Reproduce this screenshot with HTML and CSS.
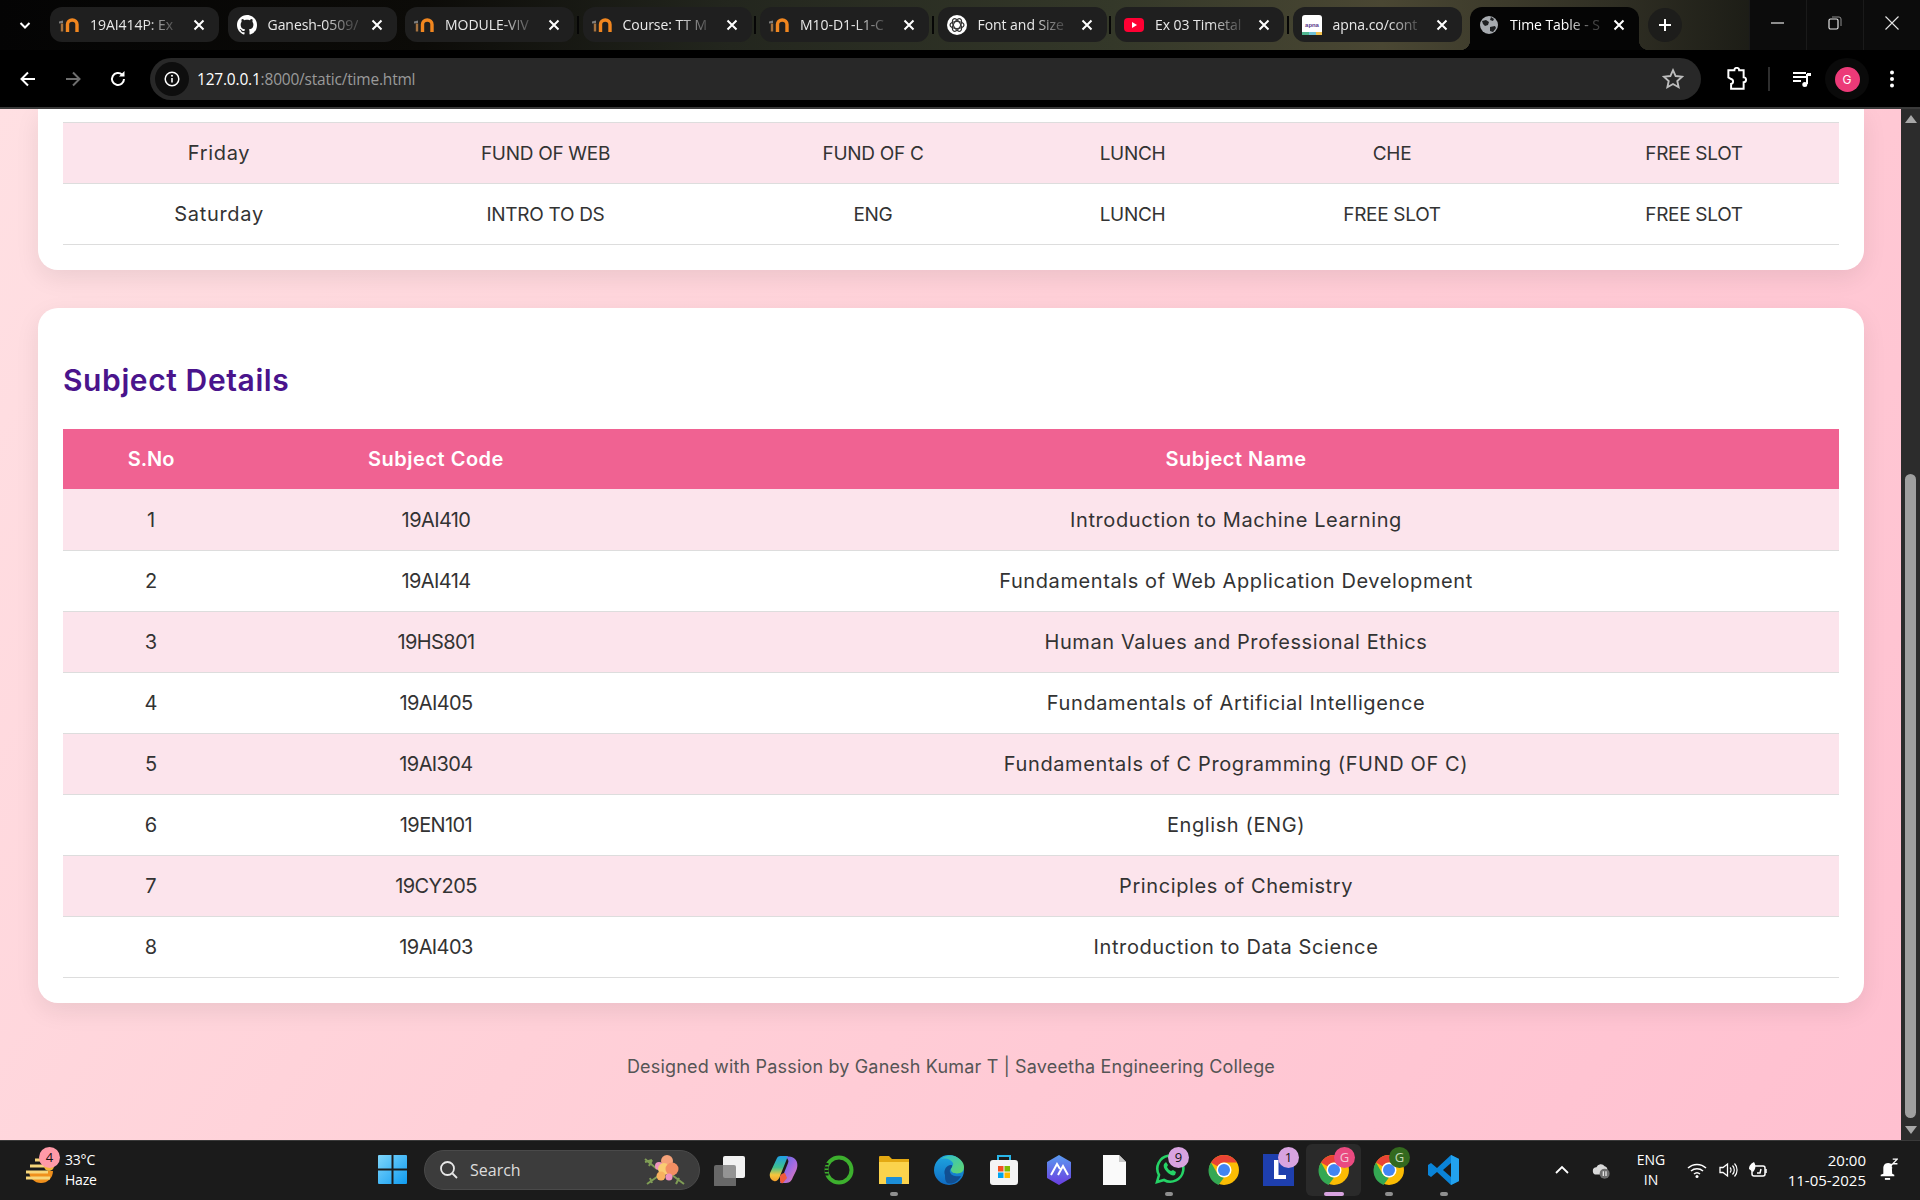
FILE: index.html
```html
<!DOCTYPE html>
<html lang="en">
<head>
<meta charset="utf-8">
<title>Time Table</title>
<link rel="stylesheet" href="styles.css">
</head>
<body>
<svg class="defs" width="0" height="0" aria-hidden="true">
  <symbol id="moodle" viewBox="0 0 20 20">
    <path d="M0 6.500 4 5.500V8L0 8.500z" fill="#7d7d7d"/>
    <path d="M3 8.500v8" stroke="#a5723f" stroke-width="2.400" fill="none"/>
    <path d="M8.500 17V9.500a4.500 4.300 0 0 1 9.500 0V17" stroke="#f1861f" stroke-width="3.400" fill="none"/>
  </symbol>
  <symbol id="close" viewBox="0 0 16 16">
    <path d="M3.500 3.500l9 9M12.500 3.500l-9 9" stroke="#fff" stroke-width="2" fill="none"/>
  </symbol>
  <symbol id="chrome" viewBox="0 0 32 32">
    <circle cx="16" cy="16" r="15" fill="#fbbc04"/>
    <path d="M16 1a15 15 0 0 1 13 7.500H16a7.500 7.500 0 0 0-6.500 3.800L3 8.500A15 15 0 0 1 16 1z" fill="#ea4335"/>
    <path d="M3 8.500l6.500 11.300A7.500 7.500 0 0 0 16 23.500l-5.500 7.400A15 15 0 0 1 3 8.500z" fill="#34a853"/>
    <circle cx="16" cy="16" r="7.500" fill="#fff"/>
    <circle cx="16" cy="16" r="6" fill="#4285f4"/>
  </symbol>
</svg>

<header class="titlebar">
  <div class="switcher"><svg class="ico16" viewBox="0 0 16 16"><path d="M3.500 6l4.500 4.500L12.500 6" stroke="#fff" stroke-width="2" fill="none"/></svg></div>
  <div class="tabs">
    <div class="tab"><svg class="fav"><use href="#moodle"/></svg><span class="tab-title">19AI414P: Ex</span><svg class="x"><use href="#close"/></svg></div>
    <div class="tab"><svg class="fav" viewBox="0 0 16 16"><path fill="#fff" d="M8 0C3.580 0 0 3.580 0 8c0 3.540 2.290 6.530 5.470 7.590.4.070.55-.170.55-.380 0-.190-.010-.820-.010-1.490-2.010.370-2.530-.490-2.690-.940-.090-.230-.480-.940-.820-1.130-.280-.150-.680-.520-.010-.530.630-.010 1.080.580 1.230.820.720 1.210 1.870.870 2.330.660.070-.520.280-.870.510-1.070-1.780-.200-3.640-.890-3.640-3.950 0-.870.310-1.590.820-2.150-.080-.200-.360-1.020.080-2.120 0 0 .670-.210 2.200.820.640-.180 1.320-.270 2-.270s1.360.090 2 .270c1.530-1.040 2.200-.820 2.200-.820.440 1.100.160 1.920.080 2.120.510.560.820 1.270.820 2.150 0 3.070-1.870 3.750-3.650 3.950.290.250.540.730.540 1.480 0 1.070-.010 1.930-.010 2.200 0 .210.150.460.550.380A8.010 8.010 0 0 0 16 8c0-4.420-3.580-8-8-8z"/></svg><span class="tab-title">Ganesh-0509/</span><svg class="x"><use href="#close"/></svg></div>
    <div class="tab"><svg class="fav"><use href="#moodle"/></svg><span class="tab-title">MODULE-VIV</span><svg class="x"><use href="#close"/></svg></div>
    <div class="tab sep"><svg class="fav"><use href="#moodle"/></svg><span class="tab-title">Course: TT M</span><svg class="x"><use href="#close"/></svg></div>
    <div class="tab sep"><svg class="fav"><use href="#moodle"/></svg><span class="tab-title">M10-D1-L1-C</span><svg class="x"><use href="#close"/></svg></div>
    <div class="tab sep"><svg class="fav" viewBox="0 0 20 20"><circle cx="10" cy="10" r="10" fill="#fff"/><g fill="none" stroke="#333" stroke-width="1.200"><ellipse cx="10" cy="10" rx="7" ry="3.500"/><ellipse cx="10" cy="10" rx="7" ry="3.500" transform="rotate(60 10 10)"/><ellipse cx="10" cy="10" rx="7" ry="3.500" transform="rotate(120 10 10)"/></g></svg><span class="tab-title">Font and Size</span><svg class="x"><use href="#close"/></svg></div>
    <div class="tab sep"><svg class="fav" viewBox="0 0 20 20"><rect y="3" width="20" height="14" rx="4" fill="#ff0033"/><path d="M8 7l5 3-5 3z" fill="#fff"/></svg><span class="tab-title">Ex 03 Timetal</span><svg class="x"><use href="#close"/></svg></div>
    <div class="tab sep"><svg class="fav" viewBox="0 0 20 20"><rect width="20" height="20" rx="3" fill="#fff"/><rect y="17" width="7" height="3" fill="#4fb58e"/><rect x="7" y="17" width="7" height="3" fill="#6fc1d8"/><rect x="14" y="17" width="6" height="3" fill="#f2c14e"/><text x="10" y="11.500" class="apna">apna</text></svg><span class="tab-title">apna.co/cont</span><svg class="x"><use href="#close"/></svg></div>
    <div class="tab active"><svg class="fav" viewBox="0 0 20 20"><circle cx="10" cy="10" r="9" fill="#a7abb0"/><path d="M3 6l4-1 3 2-1 3-3 1-2-2zM12 2l3 2-1 2-3-1zM11 12l5-1 1 2-3 4-3-1z" fill="#1e2022"/></svg><span class="tab-title">Time Table - S</span><svg class="x"><use href="#close"/></svg></div>
    <div class="newtab"><svg class="ico16" viewBox="0 0 16 16"><path d="M8 2v12M2 8h12" stroke="#fff" stroke-width="2"/></svg></div>
  </div>
  <div class="winctl">
    <div class="winbtn"><svg class="ico16" viewBox="0 0 16 16"><path d="M1 8h13" stroke="#e6e6e6" stroke-width="1.200"/></svg></div>
    <div class="winbtn"><svg class="ico16" viewBox="0 0 16 16"><rect x="2" y="4" width="9" height="10" rx="1.500" fill="none" stroke="#e6e6e6" stroke-width="1.200"/><path d="M5 2h7a2 2 0 0 1 2 2v7" fill="none" stroke="#8f8f8f"/></svg></div>
    <div class="winbtn"><svg class="ico16" viewBox="0 0 16 16"><path d="M1.500 1.500l13 13M14.500 1.500l-13 13" stroke="#e6e6e6" stroke-width="1.100"/></svg></div>
  </div>
</header>

<nav class="toolbar">
  <div class="navbtn"><svg class="ico20" viewBox="0 0 20 20"><path d="M17 10H4M10 3.500 3.500 10l6.500 6.500" stroke="#fff" stroke-width="2" fill="none"/></svg></div>
  <div class="navbtn"><svg class="ico20" viewBox="0 0 20 20"><path d="M3 10h13M10 3.500l6.500 6.500-6.500 6.500" stroke="#6e6e6e" stroke-width="2" fill="none"/></svg></div>
  <div class="navbtn"><svg class="ico20" viewBox="0 0 20 20"><path d="M16 10a6 6 0 1 1-1.800-4.300" stroke="#fff" stroke-width="2" fill="none"/><path d="M16.500 2v5.500H11z" fill="#fff"/></svg></div>
  <div class="omnibox">
    <div class="chip"><svg class="ico16" viewBox="0 0 16 16"><circle cx="8" cy="8" r="6.800" fill="none" stroke="#fff" stroke-width="1.500"/><path d="M8 7v4.500" stroke="#fff" stroke-width="1.600"/><circle cx="8" cy="4.800" r="1" fill="#fff"/></svg></div>
    <span class="url"><span class="host">127.0.0.1</span>:8000/static/time.html</span>
    <svg class="star" viewBox="0 0 20 20"><path d="M10 2l2.400 5.300 5.800.6-4.300 3.900 1.200 5.700L10 14.600l-5.100 2.900 1.200-5.700L1.800 7.900l5.800-.6z" fill="none" stroke="#bdbdbd" stroke-width="1.700"/></svg>
  </div>
  <div class="tbtn ext"><svg class="ext-ico" viewBox="0 0 20 22"><path d="M3 3h5.500a2.200 2.200 0 0 1 4.400 0H17v6.500a2.200 2.200 0 0 1 0 4.400V20H5.500v-4.500a2.300 2.300 0 0 0 0-4.500L3 9.500z" fill="none" stroke="#fff" stroke-width="1.800"/></svg></div>
  <div class="tsep"></div>
  <div class="tbtn"><svg class="ico20" viewBox="0 0 20 20"><path d="M1 4h13M1 8h13M1 12h8" stroke="#fff" stroke-width="1.800"/><path d="M15 5v10" stroke="#fff" stroke-width="2"/><circle cx="12.800" cy="15.500" r="2.500" fill="#fff"/><path d="M15 4h4v3h-4z" fill="#fff"/></svg></div>
  <div class="profile"><span class="avatar">G</span></div>
  <div class="tbtn"><svg class="ico20" viewBox="0 0 20 20"><circle cx="10" cy="3.500" r="2" fill="#fff"/><circle cx="10" cy="10" r="2" fill="#fff"/><circle cx="10" cy="16.500" r="2" fill="#fff"/></svg></div>
</nav>

<div class="viewport">
  <main class="page">
    <section class="card card-cut">
      <table class="grid timetable">
        <tbody>
          <tr class="tint"><td>Friday</td><td>FUND OF WEB</td><td>FUND OF C</td><td>LUNCH</td><td>CHE</td><td>FREE SLOT</td></tr>
          <tr><td>Saturday</td><td>INTRO TO DS</td><td>ENG</td><td>LUNCH</td><td>FREE SLOT</td><td>FREE SLOT</td></tr>
        </tbody>
      </table>
    </section>
    <section class="card">
      <h2 class="card-title">Subject Details</h2>
      <table class="grid subjects">
        <thead><tr><th>S.No</th><th>Subject Code</th><th>Subject Name</th></tr></thead>
        <tbody>
          <tr class="tint"><td>1</td><td>19AI410</td><td>Introduction to Machine Learning</td></tr>
          <tr><td>2</td><td>19AI414</td><td>Fundamentals of Web Application Development</td></tr>
          <tr class="tint"><td>3</td><td>19HS801</td><td>Human Values and Professional Ethics</td></tr>
          <tr><td>4</td><td>19AI405</td><td>Fundamentals of Artificial Intelligence</td></tr>
          <tr class="tint"><td>5</td><td>19AI304</td><td>Fundamentals of C Programming (FUND OF C)</td></tr>
          <tr><td>6</td><td>19EN101</td><td>English (ENG)</td></tr>
          <tr class="tint"><td>7</td><td>19CY205</td><td>Principles of Chemistry</td></tr>
          <tr><td>8</td><td>19AI403</td><td>Introduction to Data Science</td></tr>
        </tbody>
      </table>
    </section>
    <footer class="credit">Designed with Passion by Ganesh Kumar T | Saveetha Engineering College</footer>
  </main>
  <aside class="scrollbar">
    <div class="arrow up"></div>
    <div class="thumb"></div>
    <div class="arrow down"></div>
  </aside>
</div>

<div class="taskbar">
  <div class="tb-left">
    <div class="weather">
      <svg class="wx" viewBox="0 0 30 32"><path d="M4 17h24a12 12 0 0 1-24 0z" fill="#f0901c"/><path d="M10 6h5M5 12h20M1 18h22M1 24h24" stroke="#f7d67a" stroke-width="3"/><circle cx="24" cy="12" r="5" fill="#f5b53c"/></svg>
      <span class="badge badge-red">4</span>
      <div class="wx-text"><span>33°C</span><span>Haze</span></div>
    </div>
    <svg class="start" viewBox="0 0 29 29"><defs><linearGradient id="win" x1="0" y1="0" x2="1" y2="1"><stop offset="0" stop-color="#7fd6fb"/><stop offset="1" stop-color="#0f9bf0"/></linearGradient></defs><path fill="url(#win)" d="M0 1a1 1 0 0 1 1-1h12.500v13.500H0zM15.500 0H28a1 1 0 0 1 1 1v12.500H15.500zM0 15.500h13.500V29H1a1 1 0 0 1-1-1zM15.500 15.500H29V28a1 1 0 0 1-1 1H15.500z"/></svg>
  </div>
  <div class="search">
    <svg class="ico20 search-ico" viewBox="0 0 20 20"><circle cx="8.500" cy="8.500" r="6.500" fill="none" stroke="#e8e8e8" stroke-width="1.800"/><path d="M13.500 13.500 18 18" stroke="#e8e8e8" stroke-width="1.800"/></svg>
    <span class="search-text">Search</span>
    <svg class="flower" viewBox="0 0 42 32"><path d="M1 5l12 10M1 8l7-2M5 12l3-6M40 30l-16-12M32 30l3-6M3 30l14-10M6 24l2 5" stroke="#7f9d55" stroke-width="2"/><circle cx="23" cy="7" r="6" fill="#f5a27a"/><circle cx="15" cy="12" r="4" fill="#ef93bf"/><circle cx="20" cy="15" r="6" fill="#f9cc72"/><circle cx="28" cy="15" r="6.500" fill="#f28e63"/><circle cx="17" cy="22" r="4.500" fill="#f7b15f"/><circle cx="25" cy="23" r="3.500" fill="#ef93bf"/></svg>
  </div>
  <div class="apps">
    <div class="app"><svg class="ai" viewBox="0 0 32 32"><rect x="10" y="2" width="22" height="22" rx="2" fill="#f2f2f2"/><rect x="1" y="11" width="22" height="22" rx="2" fill="#7c7c7c" fill-opacity=".8"/></svg></div>
    <div class="app"><svg class="ai" viewBox="0 0 32 32"><defs><linearGradient id="copl" x1="0" y1="0" x2="0" y2="1"><stop offset="0" stop-color="#1f9fe6"/><stop offset=".45" stop-color="#3fc18f"/><stop offset=".75" stop-color="#f6c63c"/><stop offset="1" stop-color="#f4a02e"/></linearGradient><linearGradient id="copr" x1="0" y1="0" x2="1" y2="1"><stop offset="0" stop-color="#4c6ee8"/><stop offset=".55" stop-color="#a66be0"/><stop offset="1" stop-color="#ef7ea8"/></linearGradient></defs><path d="M9 4c1-2 3-2 5-2h6L12 22c-1 3-3 6-6 5-3-1-5-4-4-8z" fill="url(#copl)"/><path d="M18 3c4-1 7 0 9 2 3 3 3 8 1 12l-3 6c-1 3-3 6-7 6h-6l8-20c1-2 0-4-2-6z" fill="url(#copr)"/><path d="M12 22c1-2 3-3 5-3l2 5-4 5c-2 1-3-1-3-3z" fill="#ef5a3a"/></svg></div>
    <div class="app"><svg class="ai" viewBox="0 0 32 32"><circle cx="16" cy="16" r="12.500" fill="none" stroke="#3db02e" stroke-width="4"/><path d="M3.500 9v14" stroke="#1c1c1c" stroke-width="4" stroke-dasharray="2 1.500"/></svg></div>
    <div class="app running"><svg class="ai" viewBox="0 0 32 32"><path d="M1 3a1 1 0 0 1 1-1h9l3 3h17v25H1z" fill="#e4a912"/><rect x="1" y="8" width="30" height="22" fill="#fbd34c"/><rect x="8" y="23" width="16" height="7" rx="1" fill="#1c8ed8"/></svg></div>
    <div class="app"><svg class="ai" viewBox="0 0 32 32"><defs><linearGradient id="edge" x1="0" y1="0" x2="0" y2="1"><stop offset="0" stop-color="#1fa6e0"/><stop offset="1" stop-color="#0f6cc4"/></linearGradient><linearGradient id="edge2" x1="0" y1="0" x2="1" y2="1"><stop offset="0" stop-color="#2fbfd0"/><stop offset="1" stop-color="#63d66a"/></linearGradient></defs><circle cx="16" cy="16" r="15" fill="url(#edge)"/><path d="M7 6c6-7 18-6 23 3 2 4 1 9-3 10-4 1-9 0-9-3 0-4 3-4 2-7-2-4-9-6-13-3z" fill="url(#edge2)"/><path d="M12 21c-2-5 2-11 7-10 1 3-3 4-2 7 1 4 6 5 11 4-3 6-9 9-14 7-2-2-2-5-2-8z" fill="#114f92"/></svg></div>
    <div class="app"><svg class="ai" viewBox="0 0 32 32"><path d="M10 6V2h12v4" fill="none" stroke="#29b6e8" stroke-width="2"/><rect x="2" y="6" width="28" height="25" rx="3" fill="#f4f4f4"/><rect x="10" y="12" width="5.500" height="5.500" fill="#f25022"/><rect x="16.500" y="12" width="5.500" height="5.500" fill="#7fba00"/><rect x="10" y="18.500" width="5.500" height="5.500" fill="#00a4ef"/><rect x="16.500" y="18.500" width="5.500" height="5.500" fill="#ffb900"/></svg></div>
    <div class="app"><svg class="ai" viewBox="0 0 32 32"><defs><linearGradient id="hx" x1="0" y1="0" x2="0" y2="1"><stop offset="0" stop-color="#5a9bf0"/><stop offset="1" stop-color="#6a3de0"/></linearGradient></defs><path d="M16 1l12 7v16l-12 7-12-7V8z" fill="url(#hx)"/><path d="M8 21l6-11 3 5M15 21l5-9 5 9" fill="none" stroke="#fff" stroke-width="2"/></svg></div>
    <div class="app"><svg class="ai" viewBox="0 0 32 32"><path d="M5 1h16l7 7v23H5z" fill="#fafafa"/><path d="M21 1v7h7z" fill="#c8c8c8"/></svg></div>
    <div class="app running"><svg class="ai" viewBox="0 0 32 32"><path d="M4 28l2-7A13 13 0 1 1 11 26z" fill="none" stroke="#25d366" stroke-width="2.600"/><path d="M11 10c-1 2 0 5 3 8s6 4 8 3l1-3-3-2-2 1c-2-1-3-2-4-4l1-2-2-3z" fill="#25d366"/></svg><span class="badge badge-lilac">9</span></div>
    <div class="app"><svg class="ai"><use href="#chrome"/></svg></div>
    <div class="app"><svg class="ai" viewBox="0 0 32 32"><rect width="31" height="36" y="-2" fill="#1e3fae"/><path d="M11 6h4.500v15H23v4H11z" fill="#fff"/></svg><span class="badge badge-lilac">1</span></div>
    <div class="app active"><svg class="ai"><use href="#chrome"/></svg><span class="badge badge-pink">G</span></div>
    <div class="app running"><svg class="ai"><use href="#chrome"/></svg><span class="badge badge-green">G</span></div>
    <div class="app running"><svg class="ai" viewBox="0 0 32 32"><path d="M23 1l8 4v22l-8 4-14-13-6 5-3-2v-10l3-2 6 5z" fill="#0a84d8"/><path d="M23 9l-8 7 8 7z" fill="#1c1c1c"/><path d="M23 1l8 4v22l-8 4z" fill="#22a2ee"/></svg></div>
  </div>
  <div class="tray">
    <div class="tr tr-chev"><svg class="ico16" viewBox="0 0 16 16"><path d="M2 11l6-6 6 6" stroke="#fff" stroke-width="1.800" fill="none"/></svg></div>
    <div class="tr tr-cloud"><svg class="ico20" viewBox="0 0 22 20"><path d="M6 15a4 4 0 0 1 0-8 5 5 0 0 1 9-1 4 4 0 0 1 3 4l-6 5z" fill="#d9d9d9"/><circle cx="15" cy="14" r="5.500" fill="#6f6f6f"/><path d="M13.500 11.500v5M16.500 11.500v5" stroke="#fff" stroke-width="1.200"/></svg></div>
    <div class="tr tr-lang"><span>ENG</span><span>IN</span></div>
    <div class="tr tr-wifi"><svg class="ico20" viewBox="0 0 20 20"><path d="M1 8a13 13 0 0 1 18 0M4 11a9 9 0 0 1 12 0M7 14a4.500 4.500 0 0 1 6 0" stroke="#fff" stroke-width="1.500" fill="none"/><circle cx="10" cy="16.500" r="1.500" fill="#fff"/></svg></div>
    <div class="tr tr-vol"><svg class="ico20" viewBox="0 0 20 20"><path d="M2 7.500h3L9.500 4v12L5 12.500H2z" fill="none" stroke="#fff" stroke-width="1.300"/><path d="M12 7.500a3.500 3.500 0 0 1 0 5M14.500 5.500a6.500 6.500 0 0 1 0 9M16.500 3.500a9.500 9.500 0 0 1 0 13" stroke="#fff" stroke-width="1.200" fill="none"/></svg></div>
    <div class="tr tr-bat"><svg class="ico20" viewBox="0 0 20 20"><rect x="4" y="6" width="13" height="10" rx="2" fill="none" stroke="#fff" stroke-width="1.500"/><path d="M18 9v4" stroke="#fff" stroke-width="1.500"/><path d="M1 9c0-4 3-6 5-7 2 3 2 7-1 10z" fill="#fff"/><path d="M9 13h3l1-4" stroke="#fff" stroke-width="1.500" fill="none"/></svg></div>
    <div class="tr-clock"><span>20:00</span><span>11-05-2025</span></div>
    <div class="tr tr-bell"><svg class="bell-ico" viewBox="0 0 20 22"><path d="M6 15V9a4.500 4.500 0 0 1 8 -2.500l.5 8.500 2 1v1.500H3.500V16z" fill="#fff"/><path d="M7.500 20h5" stroke="#fff" stroke-width="1.800"/><path d="M11 6h3.500l-3.500 3.500h3.500M15 1h4.500l-4.500 4.500h4.500" stroke="#fff" stroke-width="1.200" fill="none"/></svg></div>
  </div>
</div>
</body>
</html>
```
FILE: styles.css
```css
* { box-sizing: border-box; }
html, body { margin: 0; padding: 0; height: 1200px; overflow: hidden; }
body {
  width: 1920px;
  display: flex;
  flex-direction: column;
  background: #000;
  font-family: Inter, "Liberation Sans", sans-serif;
}
.defs { position: absolute; }
.ico16 { width: 16px; height: 16px; display: block; }
.ico20 { width: 20px; height: 20px; display: block; }
.ext-ico { width: 22px; height: 24px; display: block; }
.bell-ico { width: 21px; height: 23px; display: block; }

/* Title bar */
.titlebar {
  height: 50px;
  flex: none;
  display: flex;
  background: linear-gradient(90deg, #040404 0%, #0c0b08 22%, #23261e 38%, #343829 58%, #4a4733 72%, #302f24 84%, #151611 94%, #0b0b0b 100%);
  font-family: "Open Sans", "Liberation Sans", sans-serif;
}
.switcher {
  width: 50px;
  flex: none;
  padding: 17px 0 0 17px;
}
.tabs {
  flex: 1;
  display: flex;
  gap: 8.5px;
  padding-top: 7px;
}
.tab {
  width: 169px;
  height: 35px;
  flex: none;
  display: flex;
  align-items: center;
  gap: 11px;
  padding: 0 12px 0 9px;
  background: #1f1f1f;
  border-radius: 12px;
  color: #e9e9e9;
  font-size: 14px;
  letter-spacing: -0.05px;
  position: relative;
}
.tab.sep::before {
  content: "";
  position: absolute;
  left: -6px;
  top: 9px;
  width: 2px;
  height: 18px;
  background: #060606;
}
.tab.active {
  height: 43px;
  padding-bottom: 8px;
  background: #050505;
  border-radius: 12px 12px 0 0;
  color: #fff;
}
.tab.active::before, .tab.active::after {
  content: "";
  position: absolute;
  bottom: 0;
  width: 10px;
  height: 10px;
}
.tab.active::before { left: -10px; background: radial-gradient(circle at 0 0, transparent 10px, #050505 10.5px); }
.tab.active::after { right: -10px; background: radial-gradient(circle at 100% 0, transparent 10px, #050505 10.5px); }
.fav { width: 20px; height: 20px; flex: none; }
.tab-title {
  flex: 1;
  white-space: nowrap;
  -webkit-mask-image: linear-gradient(90deg, #000 62%, rgba(0, 0, 0, 0.25) 92%);
  mask-image: linear-gradient(90deg, #000 62%, rgba(0, 0, 0, 0.25) 92%);
}
.x { width: 16px; height: 16px; flex: none; }
.apna { font: 700 6px "Liberation Sans", sans-serif; fill: #5b3a8c; text-anchor: middle; }
.newtab {
  width: 34px;
  height: 34px;
  margin-top: 1px;
  border-radius: 50%;
  background: #1d1d1b;
  display: flex;
  align-items: center;
  justify-content: center;
}
.winctl { display: flex; width: 171px; background: #0c0c0c; flex: none; }
.winbtn {
  width: 57px;
  display: flex;
  align-items: center;
  justify-content: center;
  border-left: 1px solid #1a1a1a;
  padding-bottom: 4px;
}

/* Toolbar */
.toolbar {
  height: 59px;
  flex: none;
  display: flex;
  align-items: flex-start;
  padding: 8px 0 0 5px;
  background: #000;
  border-bottom: 2px solid #3a3a3a;
}
.navbtn {
  width: 45px;
  height: 42px;
  display: flex;
  align-items: center;
  justify-content: center;
}
.omnibox {
  width: 1551px;
  height: 42px;
  margin-left: 10px;
  flex: none;
  display: flex;
  align-items: center;
  background: #282828;
  border-radius: 21px;
  padding: 0 17px 0 5px;
  font-family: "Open Sans", "Liberation Sans", sans-serif;
}
.chip {
  width: 34px;
  height: 34px;
  border-radius: 50%;
  background: #0e0e0e;
  display: flex;
  align-items: center;
  justify-content: center;
}
.url { flex: 1; margin-left: 8px; font-size: 15.500px; color: #9a9a9a; letter-spacing: -0.2px; }
.host { color: #fff; }
.star { width: 22px; height: 22px; }
.tbtn {
  width: 40px;
  height: 42px;
  display: flex;
  align-items: center;
  justify-content: center;
  flex: none;
}
.ext { margin-left: 15px; }
.tsep { width: 2px; height: 24px; margin: 9px 12px; background: #2e2e2e; flex: none; }
.profile {
  width: 44px;
  height: 42px;
  margin: 0 3px;
  flex: none;
  display: flex;
  align-items: center;
  justify-content: center;
  background: #0a0a0a;
  border-radius: 50%;
}
.avatar {
  width: 25px;
  height: 25px;
  border-radius: 50%;
  background: #ec3a78;
  color: #fff;
  font-size: 12px;
  display: flex;
  align-items: center;
  justify-content: center;
}

/* Page */
.viewport { height: 1031px; flex: none; display: flex; overflow: hidden; }
.page {
  width: 1901px;
  flex: none;
  padding: 0 37px 0 38px;
  background: linear-gradient(125deg, #ffe0e3 0%, #ffd0d8 45%, #ffc0d0 100%);
  color: #333;
  font-size: 20px;
}
.card {
  background: #fff;
  border-radius: 20px;
  padding: 25px;
  box-shadow: 0 8px 25px rgba(0, 0, 0, 0.08);
  margin-bottom: 38px;
}
.card-cut { border-radius: 0 0 20px 20px; padding-top: 13px; }
.card-title {
  margin: 27px 0 28px;
  height: 41px;
  line-height: 41px;
  font-size: 30px;
  font-weight: 600;
  color: #4a148c;
  letter-spacing: 0.6px;
}
.grid { width: 100%; border-collapse: collapse; table-layout: fixed; }
.grid td, .grid th {
  padding: 0;
  height: 61px;
  text-align: center;
  font-weight: 400;
  border-bottom: 1px solid #ddd;
}
.grid th {
  height: 60px;
  background: #f06292;
  color: #fff;
  font-weight: 600;
  border-bottom: 0;
  letter-spacing: 0.5px;
}
.tint { background: #fce4ec; }
.timetable { border-top: 1px solid #ddd; }
.timetable td { font-size: 19px; letter-spacing: -0.3px; }
.timetable td:nth-child(1) { width: 312px; font-size: 20px; letter-spacing: 0.7px; }
.timetable td:nth-child(2) { width: 341px; }
.timetable td:nth-child(3) { width: 314px; }
.timetable td:nth-child(4) { width: 205px; }
.timetable td:nth-child(5) { width: 314px; }
.subjects th:nth-child(1) { width: 176px; letter-spacing: 0; }
.subjects th:nth-child(2) { width: 394px; }
.subjects td:nth-child(2) { letter-spacing: -0.6px; }
.subjects td:nth-child(3) { letter-spacing: 0.6px; }
.subjects tbody tr:first-child td { padding-top: 1px; }
.credit { text-align: center; color: #555; font-size: 18px; letter-spacing: 0.17px; margin-top: 53px; }

/* Scrollbar */
.scrollbar {
  width: 19px;
  flex: none;
  background: #2c2c2c;
  display: flex;
  flex-direction: column;
  align-items: center;
  padding: 6px 0;
}
.arrow { width: 0; height: 0; border-left: 6px solid transparent; border-right: 6px solid transparent; }
.arrow.up { border-bottom: 8px solid #a8a8a8; }
.arrow.down { border-top: 8px solid #a8a8a8; margin-top: 8px; }
.thumb {
  width: 11px;
  flex: 1;
  margin-top: 351px;
  background: #9f9f9f;
  border-radius: 6px;
}

/* Taskbar */
.taskbar {
  height: 60px;
  flex: none;
  display: flex;
  align-items: center;
  padding-bottom: 2px;
  background: #1b1b1b;
  border-top: 1px solid #3a3a3a;
  color: #fff;
  font-family: "Open Sans", "Liberation Sans", sans-serif;
  font-size: 14px;
}
.tb-left {
  width: 424px;
  flex: none;
  display: flex;
  align-items: center;
  justify-content: space-between;
  padding: 0 17px 0 25px;
}
.weather { display: flex; align-items: center; gap: 10px; position: relative; }
.wx { width: 30px; height: 32px; }
.wx-text { display: flex; flex-direction: column; font-size: 14px; line-height: 20px; letter-spacing: -0.2px; }
.start { width: 29px; height: 29px; }
.badge {
  position: absolute;
  width: 21px;
  height: 21px;
  border-radius: 50%;
  color: #111;
  font-size: 13px;
  display: flex;
  align-items: center;
  justify-content: center;
}
.weather .badge { left: 14px; top: -3px; }
.badge-red { background: #ff9aa8; }
.badge-lilac { background: #d8a3e0; right: 7px; top: 3px; }
.badge-pink { background: #ea4a80; color: #f3c7d6; right: 6px; top: 3px; }
.badge-green { background: #33691e; color: #c5d8b8; right: 6px; top: 3px; }
.search {
  width: 276px;
  height: 40px;
  flex: none;
  display: flex;
  align-items: center;
  background: #3c3c3c;
  border: 1px solid #4a4a4a;
  border-radius: 20px;
  padding: 0 13px 0 14px;
  color: #dcdcdc;
  font-size: 16px;
}
.search-text { flex: 1; margin-left: 11px; }
.flower { width: 42px; height: 32px; }
.apps { display: flex; margin-left: 1px; }
.app {
  width: 55px;
  height: 52px;
  display: flex;
  align-items: center;
  justify-content: center;
  position: relative;
  border-radius: 6px;
}
.ai { width: 32px; height: 32px; overflow: hidden; }
.app.running::after, .app.active::after {
  content: "";
  position: absolute;
  bottom: 0;
  left: 50%;
  width: 8px;
  height: 4px;
  margin-left: -4px;
  background: #8f8f8f;
  border-radius: 2px;
}
.app.active { background: #2a2a2a; }
.app.active::after { width: 20px; margin-left: -10px; background: #d8a3e0; }
.tray { margin-left: auto; padding-right: 12px; display: flex; align-items: center; height: 100%; }
.tr { display: flex; align-items: center; justify-content: center; flex: none; }
.tr-chev { width: 40px; }
.tr-cloud { width: 38px; }
.tr-lang { width: 62px; flex-direction: column; line-height: 20px; font-size: 14px; }
.tr-wifi { width: 30px; }
.tr-vol { width: 32px; }
.tr-bat { width: 28px; }
.tr-clock { width: 94px; display: flex; flex-direction: column; align-items: flex-end; line-height: 20px; font-size: 15px; white-space: nowrap; letter-spacing: 0; }
.tr-bell { width: 42px; }
```
